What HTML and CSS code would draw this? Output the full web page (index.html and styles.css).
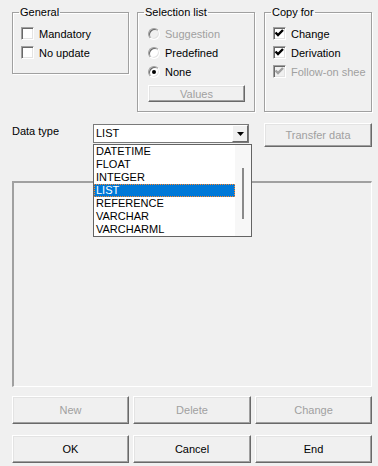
FILE: index.html
```html
<html>
<head>
<link rel="stylesheet" href="styles.css">
</head>
<body>
<div class="dialog">
  <div class="groups">
    <fieldset class="group general">
      <legend>General</legend>
      <div class="opt"><span class="check"></span>Mandatory</div>
      <div class="opt"><span class="check"></span>No update</div>
    </fieldset>
    <fieldset class="group selection">
      <legend>Selection list</legend>
      <div class="opt disabled"><span class="radio"></span>Suggestion</div>
      <div class="opt"><span class="radio"></span>Predefined</div>
      <div class="opt"><span class="radio on"></span>None</div>
      <div class="btn values disabled">Values</div>
    </fieldset>
    <fieldset class="group copy">
      <legend>Copy for</legend>
      <div class="opt"><span class="check"><svg width="11" height="11" viewBox="0 0 11 11"><path d="M1.5 4.5 L4 7 L9 2" /></svg></span>Change</div>
      <div class="opt"><span class="check"><svg width="11" height="11" viewBox="0 0 11 11"><path d="M1.5 4.5 L4 7 L9 2" /></svg></span>Derivation</div>
      <div class="opt disabled"><span class="check"><svg width="11" height="11" viewBox="0 0 11 11"><path d="M1.5 4.5 L4 7 L9 2" /></svg></span>Follow-on shee</div>
    </fieldset>
  </div>

  <div class="datatype">
    <span class="dt-label">Data type</span>
    <div class="combo">
      <div class="combo-field">
        <span class="combo-text">LIST</span>
        <span class="combo-btn"><svg width="7" height="4" viewBox="0 0 7 4"><polygon points="0,0 7,0 3.5,4" /></svg></span>
      </div>
      <div class="combo-list">
        <ul>
          <li>DATETIME</li>
          <li>FLOAT</li>
          <li>INTEGER</li>
          <li class="selected">LIST</li>
          <li>REFERENCE</li>
          <li>VARCHAR</li>
          <li>VARCHARML</li>
        </ul>
        <div class="scroll"><div class="thumb"></div></div>
      </div>
    </div>
    <div class="btn transfer disabled">Transfer data</div>
  </div>

  <div class="panel"></div>

  <div class="buttons">
    <div class="btn disabled">New</div>
    <div class="btn disabled">Delete</div>
    <div class="btn disabled">Change</div>
    <div class="btn">OK</div>
    <div class="btn">Cancel</div>
    <div class="btn">End</div>
  </div>
</div>
</body>
</html>
```

FILE: styles.css
```css
* {
  box-sizing: border-box;
}

body {
  margin: 0;
  background: #f0f0f0;
  font-family: "Liberation Sans", Arial, sans-serif;
  font-size: 11px;
  color: #000;
}

.dialog {
  width: 378px;
  padding: 6px 6px 0 12px;
}

.groups {
  display: flex;
  align-items: stretch;
}

.group {
  margin: 0;
  min-width: 0;
  border: 1px solid #a0a0a0;
  box-shadow: 1px 1px 0 #fff, inset 1px 1px 0 #fff;
  padding: 5px 0 9px 8px;
}

.group legend {
  padding: 0 1px;
  line-height: 13px;
  margin-left: -2px;
}

.general {
  width: 117px;
  align-self: flex-start;
  padding-bottom: 11px;
  margin-right: 8px;
}

.selection {
  width: 118px;
  padding-left: 10px;
  margin-right: 9px;
}

.selection legend {
  margin-left: -4px;
}

.copy {
  width: 108px;
  overflow: hidden;
}

.opt {
  display: flex;
  align-items: center;
  height: 19px;
  gap: 5px;
  white-space: nowrap;
}

.opt.disabled {
  color: #a0a0a0;
}

.check {
  flex: none;
  width: 13px;
  height: 13px;
  background: #fff;
  border: 1px solid;
  border-color: #a0a0a0 #fff #fff #a0a0a0;
  box-shadow: inset 1px 1px 0 #696969, inset -1px -1px 0 #e3e3e3;
}

.check svg {
  display: block;
  fill: none;
  stroke: #000;
  stroke-width: 2.4;
}

.opt.disabled .check {
  background: #f0f0f0;
}

.opt.disabled .check svg {
  stroke: #a0a0a0;
}

.radio {
  flex: none;
  width: 12px;
  height: 12px;
  border-radius: 50%;
  background: #fff;
  border: 1px solid;
  border-color: #a0a0a0 #fff #fff #a0a0a0;
  box-shadow: inset 1px 1px 0 #696969, inset -1px -1px 0 #e3e3e3;
  display: flex;
  align-items: center;
  justify-content: center;
}

.opt.disabled .radio {
  background: #f0f0f0;
}

.radio.on::after {
  content: "";
  width: 4px;
  height: 4px;
  border-radius: 50%;
  background: #000;
}

.btn {
  display: flex;
  align-items: center;
  justify-content: center;
  background: #f0f0f0;
  border: 1px solid;
  border-color: #fff #696969 #696969 #fff;
  box-shadow: inset -1px -1px 0 #a0a0a0, inset 1px 1px 0 #e3e3e3;
  white-space: nowrap;
}

.btn.disabled {
  color: #a0a0a0;
}

.values {
  width: 97px;
  height: 17px;
  margin-top: 4px;
}

.datatype {
  display: flex;
  align-items: flex-start;
  margin-top: 11px;
  height: 24px;
}

.dt-label {
  width: 81px;
  line-height: 13px;
  padding-top: 2px;
}

.combo {
  position: relative;
  width: 156px;
  height: 19px;
  margin-top: 1px;
  margin-right: 15px;
}

.combo-field {
  display: flex;
  height: 19px;
  background: #fff;
  border: 1px solid #7a7a7a;
}

.combo-text {
  flex: 1;
  line-height: 17px;
  padding-left: 2px;
}

.combo-btn {
  width: 16px;
  display: flex;
  align-items: center;
  justify-content: center;
  background: #f0f0f0;
  border: 1px solid;
  border-color: #fff #696969 #696969 #fff;
}

.combo-list {
  position: absolute;
  top: 20px;
  left: 0;
  width: 159px;
  display: flex;
  background: #fff;
  border: 1px solid #646464;
  z-index: 2;
}

.combo-list ul {
  list-style: none;
  margin: 0;
  padding: 0;
  width: 141px;
}

.combo-list li {
  height: 13px;
  line-height: 13px;
  padding-left: 2px;
}

.combo-list li.selected {
  background: #0078d7;
  color: #fff;
  outline: 1px dotted #ff8728;
  outline-offset: -1px;
}

.scroll {
  width: 16px;
  background: #f7f7f7;
  padding: 23px 0 0 7px;
}

.thumb {
  width: 2px;
  height: 51px;
  background: #8a8a8a;
}

.transfer {
  width: 108px;
  height: 24px;
}

.panel {
  margin-top: 34px;
  width: 360px;
  height: 206px;
  border-style: solid;
  border-width: 2px 1px 1px 2px;
  border-color: #a0a0a0 #fff #fff #a0a0a0;
}

.buttons {
  display: grid;
  grid-template-columns: 117px 118px 117px;
  grid-auto-rows: 28px;
  column-gap: 4px;
  row-gap: 11px;
  margin-top: 9px;
}
```
